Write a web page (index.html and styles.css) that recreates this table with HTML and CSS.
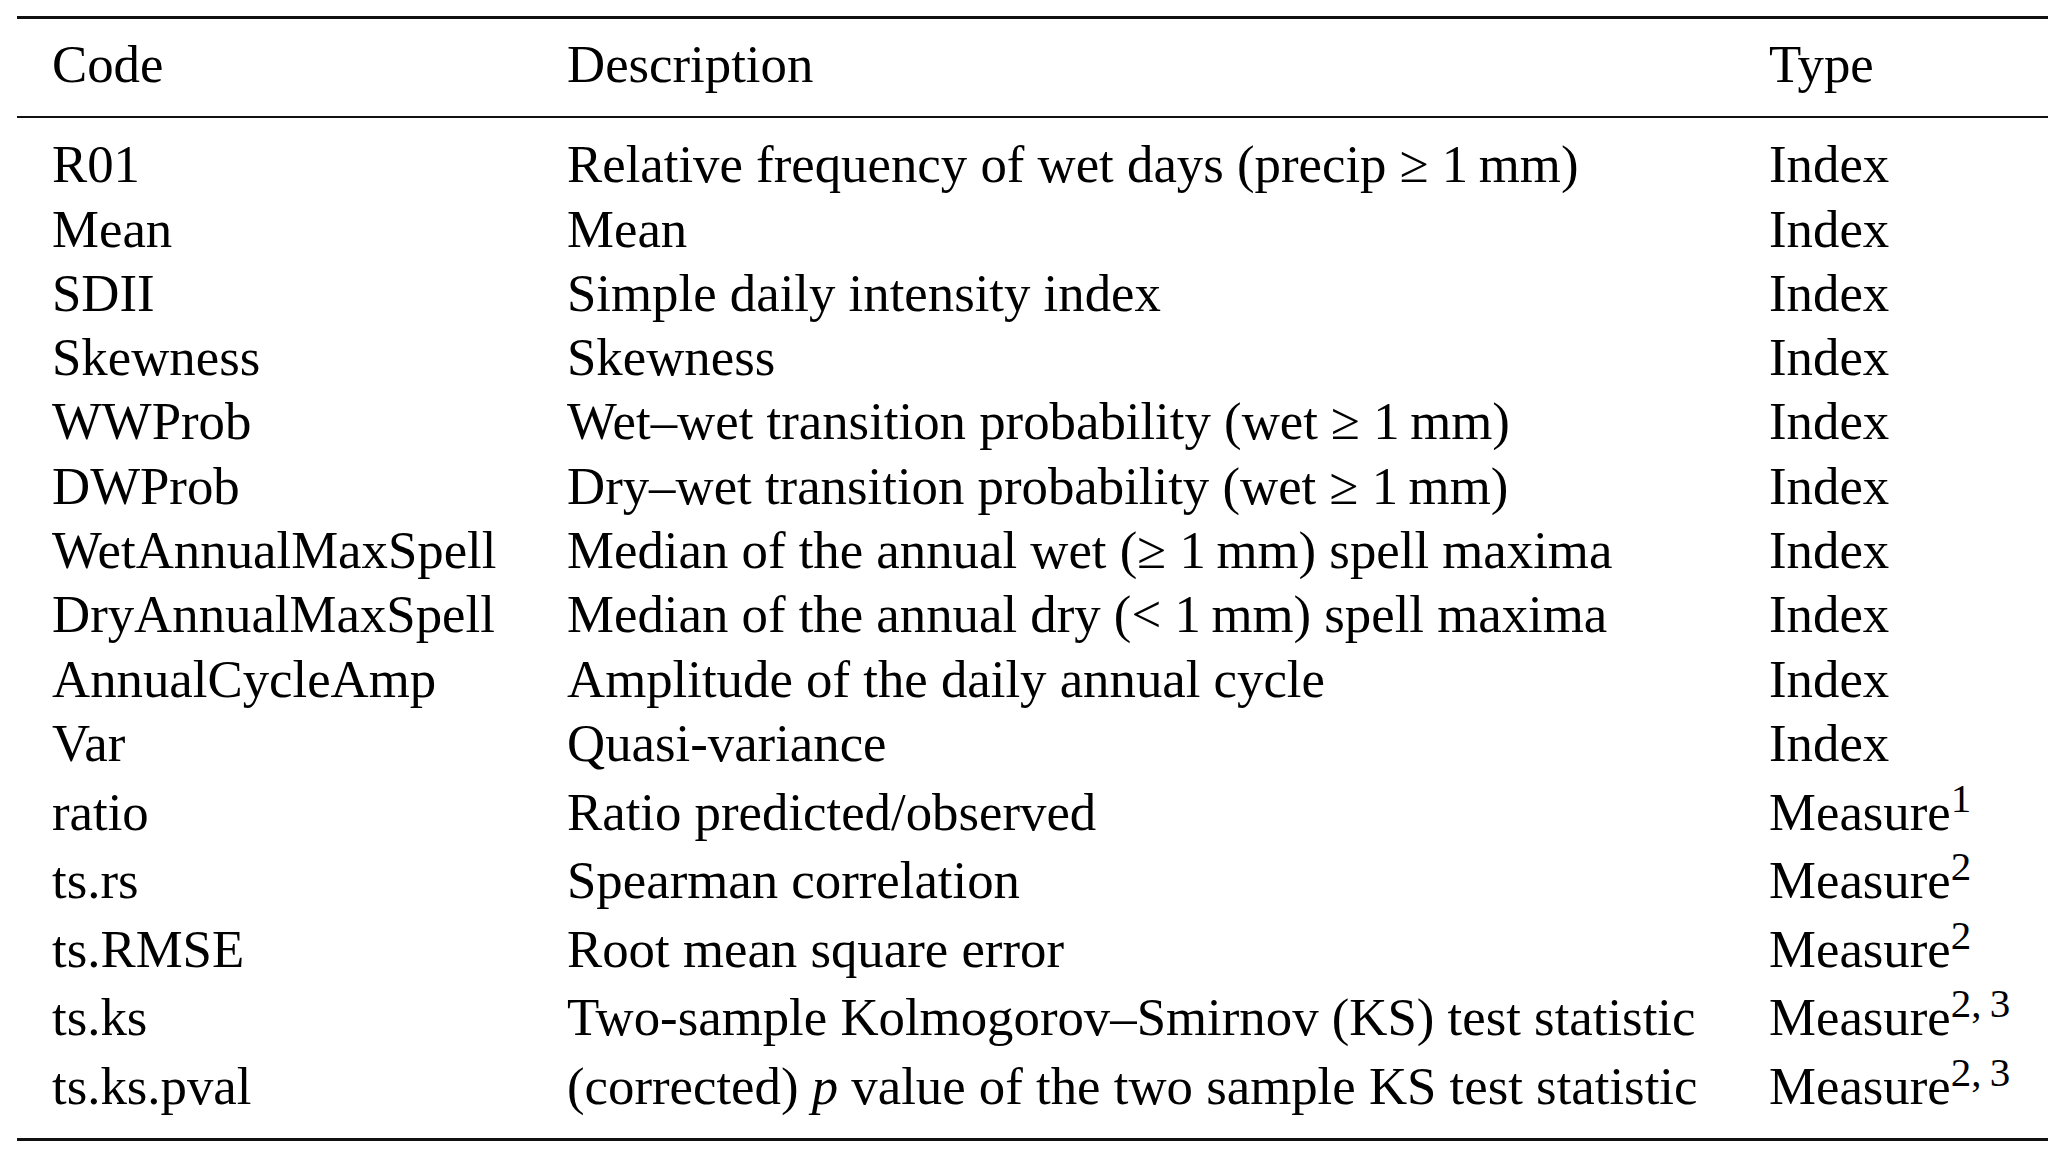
FILE: index.html
```html
<!DOCTYPE html>
<html lang="en">
<head>
<meta charset="utf-8">
<title>Indices and measures</title>
<link rel="stylesheet" href="styles.css">
</head>
<body>
<div class="tbl">
  <div class="row head">
    <div>Code</div><div>Description</div><div>Type</div>
  </div>
  <div class="body">
    <div class="row"><div>R01</div><div>Relative frequency of wet days (precip ≥ 1&#8201;mm)</div><div>Index</div></div>
    <div class="row"><div>Mean</div><div>Mean</div><div>Index</div></div>
    <div class="row"><div>SDII</div><div>Simple daily intensity index</div><div>Index</div></div>
    <div class="row"><div>Skewness</div><div>Skewness</div><div>Index</div></div>
    <div class="row"><div>WWProb</div><div>Wet–wet transition probability (wet ≥ 1&#8201;mm)</div><div>Index</div></div>
    <div class="row"><div>DWProb</div><div>Dry–wet transition probability (wet ≥ 1&#8201;mm)</div><div>Index</div></div>
    <div class="row"><div>WetAnnualMaxSpell</div><div>Median of the annual wet (≥ 1&#8201;mm) spell maxima</div><div>Index</div></div>
    <div class="row"><div>DryAnnualMaxSpell</div><div>Median of the annual dry (&lt; 1&#8201;mm) spell maxima</div><div>Index</div></div>
    <div class="row"><div>AnnualCycleAmp</div><div>Amplitude of the daily annual cycle</div><div>Index</div></div>
    <div class="row"><div>Var</div><div>Quasi-variance</div><div>Index</div></div>
    <div class="row measure"><div>ratio</div><div>Ratio predicted/observed</div><div>Measure<sup>1</sup></div></div>
    <div class="row measure"><div>ts.rs</div><div>Spearman correlation</div><div>Measure<sup>2</sup></div></div>
    <div class="row measure"><div>ts.RMSE</div><div>Root mean square error</div><div>Measure<sup>2</sup></div></div>
    <div class="row measure"><div>ts.ks</div><div>Two-sample Kolmogorov–Smirnov (KS) test statistic</div><div>Measure<sup>2,&#8201;3</sup></div></div>
    <div class="row measure"><div>ts.ks.pval</div><div>(corrected) <i>p</i> value of the two sample KS test statistic</div><div>Measure<sup>2,&#8201;3</sup></div></div>
  </div>
</div>
</body>
</html>
```

FILE: styles.css
```css
html, body {
  margin: 0;
  padding: 0;
  background: #ffffff;
}

body {
  font-family: "Liberation Serif", "Times New Roman", serif;
  color: #000000;
}

.tbl {
  margin: 16px 0 0 17px;
  width: 2031px;
  border-top: 3px solid #111111;
  border-bottom: 3px solid #111111;
  font-size: 52.8px;
  line-height: 64.3px;
}

.row {
  display: grid;
  grid-template-columns: 515px 1202px 1fr;
  padding-left: 35px;
  white-space: nowrap;
}

.head {
  padding-top: 13.3px;
  padding-bottom: 19.4px;
  border-bottom: 2px solid #111111;
}

.body {
  padding-top: 14.3px;
  padding-bottom: 19.7px;
}

.measure {
  padding-top: 4.3px;
}

sup {
  font-size: 41px;
  line-height: 0;
  vertical-align: 18px;
}
```
